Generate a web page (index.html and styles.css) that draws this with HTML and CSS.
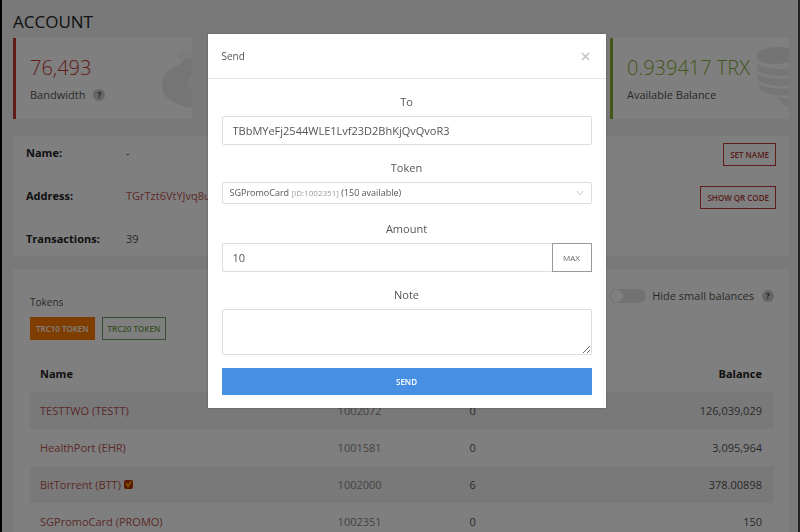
FILE: index.html
```html
<!DOCTYPE html>
<html lang="en">
  <head>
    <meta charset="utf-8">
    <title>Account</title>
    <link rel="stylesheet" href="styles.css">
  </head>
  <body>
    <main class="page">
      <h1>ACCOUNT</h1>

      <div class="stats">
        <div class="card stat stat-red">
          <svg class="stat-art" width="34" height="64" viewBox="0 0 34 64">
            <path d="M18 8l7-4 9 3v7H22z" fill="#f6f6f6"/>
            <path d="M34 12q-8 0-12 6C10 22 4 30 4 39c0 12 10 20 30 23z" fill="#ebebeb"/>
            <path d="M34 26l-4 10v5l4 3z" fill="#f6f6f6"/>
          </svg>
          <h2>76,493</h2>
          <p>Bandwidth <span class="help">?</span></p>
        </div>
        <div class="card stat stat-green">
          <svg class="stat-art" width="34" height="64" viewBox="0 0 34 64">
            <path d="M2 6q16-8 32-4v14q-17 5-32-2z" fill="#e9e9e9"/>
            <path d="M2 18q15 7 32 4v7q-18 3-32-4zM2 28q15 7 32 4v7q-17 3-31-4zM3 38q14 6 31 4v7q-16 2-30-5zM22 51q6 2 12 1v8q-7 0-9-5z" fill="#ececec"/>
          </svg>
          <h2>0.939417 TRX</h2>
          <p>Available Balance</p>
        </div>
      </div>

      <div class="card details">
        <div class="details-row">
          <b>Name:</b><span>-</span>
          <button class="btn btn-red">SET NAME</button>
        </div>
        <div class="details-row">
          <b>Address:</b><a href="#">TGrTzt6VtYJvq8u</a>
          <button class="btn btn-red">SHOW QR CODE</button>
        </div>
        <div class="details-row">
          <b>Transactions:</b><span>39</span>
        </div>
      </div>

      <div class="card tokens">
        <div class="tokens-head">
          <h3>Tokens</h3>
          <div class="hide-small">
            <input type="checkbox" class="switch" id="hide-small">
            <label for="hide-small">Hide small balances</label>
            <span class="help">?</span>
          </div>
        </div>
        <div class="token-types">
          <button class="btn btn-orange">TRC10 TOKEN</button>
          <button class="btn btn-green">TRC20 TOKEN</button>
        </div>
        <table>
          <thead>
            <tr><th class="col-name">Name</th><th class="col-id"></th><th class="col-precision"></th><th class="col-balance">Balance</th></tr>
          </thead>
          <tbody>
            <tr><td><a href="#">TESTTWO (TESTT)</a></td><td class="col-id">1002072</td><td>0</td><td class="col-balance">126,039,029</td></tr>
            <tr><td><a href="#">HealthPort (EHR)</a></td><td class="col-id">1001581</td><td>0</td><td class="col-balance">3,095,964</td></tr>
            <tr>
              <td>
                <a href="#">BitTorrent (BTT)</a>
                <svg class="verified" width="9" height="9" viewBox="0 0 9 9">
                  <rect width="9" height="9" rx="2" fill="#b83000"/>
                  <path d="M2 3l2 3.500 3-5" fill="none" stroke="#ffb000" stroke-width="1.500"/>
                </svg>
              </td>
              <td class="col-id">1002000</td><td>6</td><td class="col-balance">378.00898</td>
            </tr>
            <tr><td><a href="#">SGPromoCard (PROMO)</a></td><td class="col-id">1002351</td><td>0</td><td class="col-balance">150</td></tr>
          </tbody>
        </table>
      </div>
    </main>

    <div class="overlay">
      <form class="modal" role="dialog" aria-labelledby="modal-title">
        <div class="modal-header">
          <span id="modal-title">Send</span>
          <button type="button" class="close" aria-label="Close">
            <svg width="9" height="9" viewBox="0 0 9 9"><path d="M1 1l7 7M8 1L1 8" stroke="#c4c4c4" stroke-width="1.600"/></svg>
          </button>
        </div>
        <div class="modal-body">
          <div class="field">
            <label for="to">To</label>
            <input type="text" id="to" value="TBbMYeFj2544WLE1Lvf23D2BhKjQvQvoR3">
          </div>
          <div class="field field-token">
            <label for="token">Token</label>
            <select id="token">
              <button><selectedcontent></selectedcontent><svg width="8" height="6" viewBox="0 0 8 6"><path d="M1 1l3 4 3-4" fill="none" stroke="#c8c8c8"/></svg></button>
              <option selected>SGPromoCard <small>[ID:1002351]</small> (150 available)</option>
            </select>
          </div>
          <div class="field">
            <label for="amount">Amount</label>
            <div class="input-group">
              <input type="text" id="amount" value="10">
              <button type="button" class="btn-max">MAX</button>
            </div>
          </div>
          <div class="field">
            <label for="note">Note</label>
            <textarea id="note"></textarea>
          </div>
          <button type="button" class="btn-send">SEND</button>
        </div>
      </form>
    </div>
  </body>
</html>
```

FILE: styles.css
```css
* {
  box-sizing: border-box;
}
body {
  margin: 0;
  height: 100vh;
  overflow: hidden;
  background: #f3f3f3;
  border-left: 2px solid #000;
  border-right: 2px solid #444;
  color: #555;
  font-family: "Open Sans", "Noto Sans", sans-serif;
  font-size: 11px;
  line-height: 20px;
}
h1, h2, h3, p {
  margin: 0;
  font-weight: 400;
}
a {
  color: #b85450;
  text-decoration: none;
}
button, input, select, textarea {
  font-family: inherit;
  margin: 0;
}
.page {
  padding: 10px 9px 0 11px;
}
.page h1 {
  color: #222;
  font-size: 17px;
  line-height: 24px;
}
.card {
  background: #fff;
}

/* top figures */
.stats {
  display: grid;
  grid-template-columns: repeat(4, 1fr);
  gap: 20px;
  margin-top: 4px;
}
.stat {
  position: relative;
  height: 81px;
  padding: 16px 0 0 14px;
  border-left: 3px solid;
}
.stat h2 {
  font-size: 20px;
  font-weight: 300;
  line-height: 28px;
}
.stat p {
  display: flex;
  align-items: center;
  gap: 8px;
  margin-top: 3px;
}
.stat-red {
  border-color: #c23631;
}
.stat-red h2 {
  color: #c23631;
}
.stat-green {
  grid-column: 4;
  border-color: #7fb02a;
}
.stat-green h2 {
  color: #84ae38;
}
.stat-art {
  position: absolute;
  right: 0;
  top: 8px;
}
.help {
  width: 12px;
  height: 12px;
  border-radius: 50%;
  background: #ccc;
  color: #444;
  font-size: 8px;
  font-weight: 700;
  line-height: 12px;
  text-align: center;
}

.btn {
  height: 23px;
  padding: 0 6px;
  border: 1px solid;
  background: none;
  font-size: 8px;
  font-weight: 600;
}
.btn-red {
  border-color: #c23631;
  color: #b03a36;
}
.token-types .btn {
  padding: 0 5px;
}
.btn-orange {
  border-color: #ff7a00;
  background: #ff7a00;
  color: #fff;
}
.btn-green {
  border-color: #6f9f6a;
  color: #6f9f4a;
}

/* account details */
.details {
  display: flex;
  flex-direction: column;
  gap: 20px;
  margin-top: 17px;
  padding: 7px 13px 4px;
}
.details-row {
  display: grid;
  grid-template-columns: 100px 1fr auto;
  height: 23px;
}
.details-row b {
  color: #222;
}

/* tokens */
.tokens {
  margin-top: 13px;
  padding: 17px 15px 0 17px;
}
.tokens-head {
  display: flex;
  justify-content: space-between;
  align-items: flex-start;
}
.tokens-head h3 {
  margin-top: 6px;
  font-size: 10px;
}
.hide-small {
  display: flex;
  align-items: center;
  gap: 6px;
}
.hide-small .help {
  margin-left: 2px;
}
.switch {
  appearance: none;
  width: 36px;
  height: 14px;
  border-radius: 7px;
  background: radial-gradient(circle at 7px 7px, #fff 6px, #e4e4e4 6px);
}
.token-types {
  display: flex;
  gap: 7px;
  margin-top: 5px;
}
table {
  width: 100%;
  margin-top: 15px;
  border-collapse: collapse;
  table-layout: fixed;
}
th, td {
  height: 37px;
  padding: 0 12px 0 10px;
  text-align: left;
}
th {
  color: #222;
}
tbody tr:nth-child(odd) {
  background: #f3f3f3;
}
.col-name {
  width: 40%;
}
.col-id {
  width: 132px;
  color: #888;
}
.col-precision {
  width: 18%;
}
th.col-balance, td.col-balance {
  text-align: right;
}

/* send dialog */
.overlay {
  position: fixed;
  inset: 0;
  display: flex;
  justify-content: center;
  align-items: flex-start;
  padding: 34px 0 0 13px;
  background: rgba(0, 0, 0, .5);
}
.modal {
  width: 90%;
  max-width: 398px;
  background: #fff;
  box-shadow: 0 0 2px rgba(0, 0, 0, .3);
}
.modal-header {
  display: flex;
  justify-content: space-between;
  align-items: center;
  height: 45px;
  padding: 0 14px;
  border-bottom: 1px solid #e5e5e5;
  font-size: 10px;
}
.close {
  display: flex;
  padding: 2px;
  border: 0;
  background: none;
}
.modal-body {
  padding: 13px 14px;
}
.field {
  display: flex;
  flex-direction: column;
  gap: 4px;
  margin-bottom: 13px;
}
.field-token {
  margin-bottom: 15px;
}
.field label {
  text-align: center;
}
.field input, .field select, .field textarea {
  width: 100%;
  border: 1px solid #ddd;
  border-radius: 2px;
  background: #fff;
  color: #555;
  outline: 0;
}
.field input {
  height: 29px;
  padding: 0 10px;
  font-size: 11px;
}
.field select {
  appearance: base-select;
  height: 22px;
  min-height: 0;
  padding: 0 7px;
  font-size: 9px;
}
.field select::picker-icon {
  display: none;
}
.field select button {
  display: flex;
  justify-content: space-between;
  align-items: center;
  width: 100%;
}
.field select small {
  color: #999;
  font-size: 8px;
}
.field textarea {
  display: block;
  height: 46px;
  resize: vertical;
}
.input-group {
  display: flex;
}
.input-group input {
  flex: 1;
  border-right: 0;
}
.btn-max {
  width: 40px;
  border: 1px solid #999;
  background: #fff;
  color: #666;
  font-size: 8px;
}
.btn-send {
  display: block;
  width: 100%;
  height: 27px;
  border: 0;
  background: #478fe2;
  color: #fff;
  font-size: 8px;
  font-weight: 600;
}
```
